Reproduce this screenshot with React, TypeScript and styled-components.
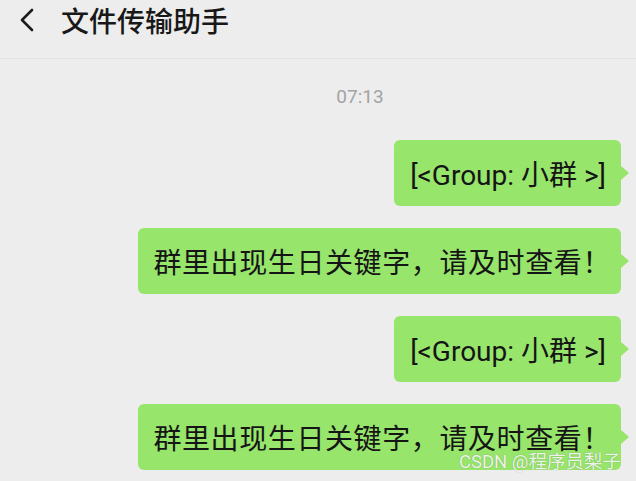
import React from "react";
import styled, { createGlobalStyle } from "styled-components";

const Global = createGlobalStyle`
  html, body { margin: 0; padding: 0; background: #ededed; }
  body { font-family: Roboto, "Noto Sans CJK SC", sans-serif; }
`;

const Screen = styled.div`
  position: relative;
  width: 636px;
  height: 481px;
  overflow: hidden;
  background: #ededed;
  display: flex;
  flex-direction: column;
`;

const Header = styled.header`
  height: 59px;
  box-sizing: border-box;
  border-bottom: 1px solid #e2e2e2;
  display: flex;
  align-items: center;
  padding-left: 18px;
  padding-bottom: 18px;
  background: #ededed;
`;

const BackButton = styled.span`
  display: flex;
  width: 18px;
  height: 24px;
  margin-right: 25px;
`;

const Title = styled.h1`
  margin: 0;
  font-family: "Noto Sans CJK SC", sans-serif;
  font-size: 28px;
  font-weight: 500;
  color: #181818;
  line-height: 1;
`;

const Chat = styled.main`
  display: flex;
  flex-direction: column;
  gap: 22px;
  padding: 0 15px;
`;

const Time = styled.div`
  align-self: center;
  margin: 28px 0 11px 84px;
  font-size: 19px;
  color: #a3a3a3;
  line-height: 20px;
`;

const Row = styled.div`
  display: flex;
  justify-content: flex-end;
`;

const Bubble = styled.div<{ $wide?: boolean }>`
  position: relative;
  height: 66px;
  box-sizing: border-box;
  display: flex;
  align-items: center;
  padding: ${(p) => (p.$wide ? "0 10px 0 15px" : "0 15px 0 16px")};
  background: #97e56b;
  border-radius: 6px;
  font-family: Roboto, "Noto Sans CJK SC", sans-serif;
  font-size: 28px;
  letter-spacing: ${(p) => (p.$wide ? "0.6px" : "0")};
  color: #151515;
  white-space: nowrap;
  &::after {
    content: "";
    position: absolute;
    right: -8px;
    top: 50%;
    margin-top: -7px;
    border-left: 8px solid #97e56b;
    border-top: 7px solid transparent;
    border-bottom: 7px solid transparent;
  }
`;

const Watermark = styled.div`
  position: absolute;
  right: 15px;
  bottom: 9px;
  font-family: Roboto, "Noto Sans CJK SC", sans-serif;
  font-size: 18.5px;
  color: rgba(255, 255, 255, 0.9);
  text-shadow: 0 0 1px rgba(0, 0, 0, 0.35);
  line-height: 20px;
`;

const messages = [
  { text: "[<Group: 小群 >]", wide: false },
  { text: "群里出现生日关键字，请及时查看！", wide: true },
  { text: "[<Group: 小群 >]", wide: false },
  { text: "群里出现生日关键字，请及时查看！", wide: true },
];

export default function App() {
  return (
    <>
      <Global />
      <Screen>
        <Header>
          <BackButton>
            <svg width="18" height="24" viewBox="0 0 18 24" fill="none">
              <path d="M14 2 L4 12 L14 22" stroke="#1c1c1c" strokeWidth="2.6" strokeLinecap="round" strokeLinejoin="round" />
            </svg>
          </BackButton>
          <Title>文件传输助手</Title>
        </Header>
        <Chat>
          <Time>07:13</Time>
          {messages.map((m, i) => (
            <Row key={i}>
              <Bubble $wide={m.wide}>{m.text}</Bubble>
            </Row>
          ))}
        </Chat>
        <Watermark>CSDN @程序员梨子</Watermark>
      </Screen>
    </>
  );
}
